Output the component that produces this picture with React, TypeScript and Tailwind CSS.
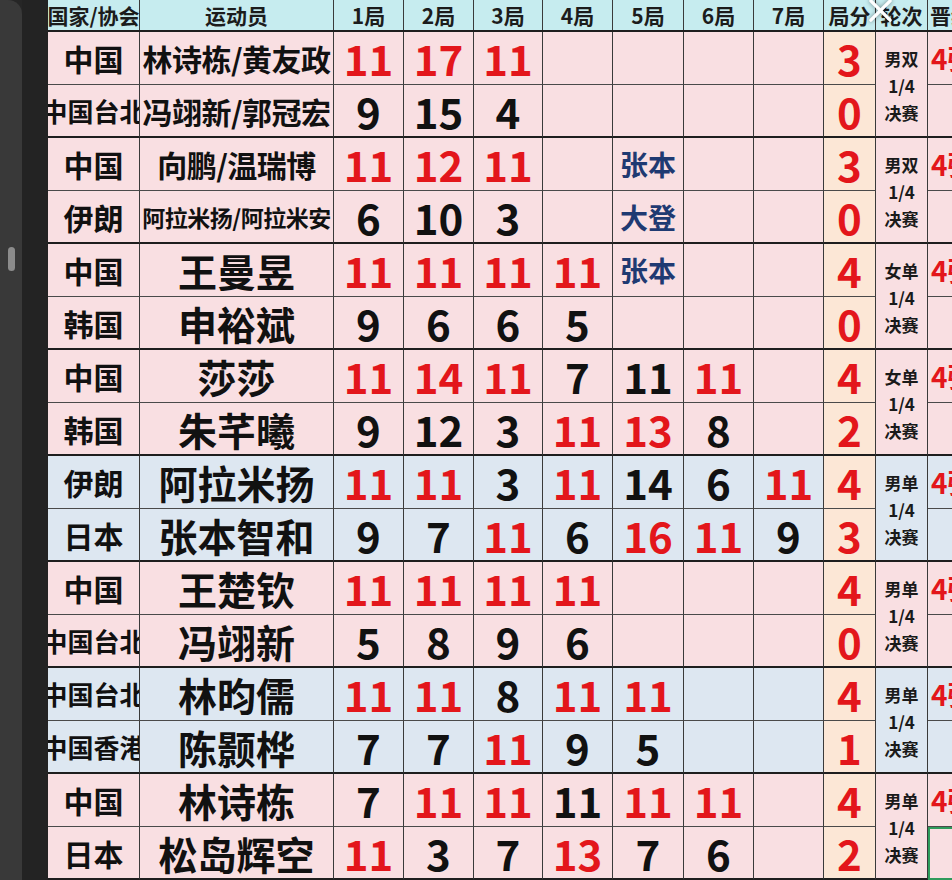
import { Fragment } from "react";

type Side = {
  country: string;
  name: string;
  scores: (number | null)[];
  total: number;
  note?: string;
};

type Match = {
  a: Side;
  b: Side;
  round: string;
  tint: "pink" | "blue";
  doubles?: boolean;
};

const matches: Match[] = [
  {
    a: { country: "中国", name: "林诗栋/黄友政", scores: [11, 17, 11, null, null, null, null], total: 3 },
    b: { country: "中国台北", name: "冯翊新/郭冠宏", scores: [9, 15, 4, null, null, null, null], total: 0 },
    round: "男双",
    tint: "pink",
    doubles: true,
  },
  {
    a: { country: "中国", name: "向鹏/温瑞博", scores: [11, 12, 11, null, null, null, null], total: 3, note: "张本" },
    b: { country: "伊朗", name: "阿拉米扬/阿拉米安", scores: [6, 10, 3, null, null, null, null], total: 0, note: "大登" },
    round: "男双",
    tint: "pink",
    doubles: true,
  },
  {
    a: { country: "中国", name: "王曼昱", scores: [11, 11, 11, 11, null, null, null], total: 4, note: "张本" },
    b: { country: "韩国", name: "申裕斌", scores: [9, 6, 6, 5, null, null, null], total: 0 },
    round: "女单",
    tint: "pink",
  },
  {
    a: { country: "中国", name: "莎莎", scores: [11, 14, 11, 7, 11, 11, null], total: 4 },
    b: { country: "韩国", name: "朱芊曦", scores: [9, 12, 3, 11, 13, 8, null], total: 2 },
    round: "女单",
    tint: "pink",
  },
  {
    a: { country: "伊朗", name: "阿拉米扬", scores: [11, 11, 3, 11, 14, 6, 11], total: 4 },
    b: { country: "日本", name: "张本智和", scores: [9, 7, 11, 6, 16, 11, 9], total: 3 },
    round: "男单",
    tint: "blue",
  },
  {
    a: { country: "中国", name: "王楚钦", scores: [11, 11, 11, 11, null, null, null], total: 4 },
    b: { country: "中国台北", name: "冯翊新", scores: [5, 8, 9, 6, null, null, null], total: 0 },
    round: "男单",
    tint: "pink",
  },
  {
    a: { country: "中国台北", name: "林昀儒", scores: [11, 11, 8, 11, 11, null, null], total: 4 },
    b: { country: "中国香港", name: "陈颢桦", scores: [7, 7, 11, 9, 5, null, null], total: 1 },
    round: "男单",
    tint: "blue",
  },
  {
    a: { country: "中国", name: "林诗栋", scores: [7, 11, 11, 11, 11, 11, null], total: 4 },
    b: { country: "日本", name: "松岛辉空", scores: [11, 3, 7, 13, 7, 6, null], total: 2 },
    round: "男单",
    tint: "pink",
  },
];

const headers = ["国家/协会", "运动员", "1局", "2局", "3局", "4局", "5局", "6局", "7局", "局分", "轮次", "晋级"];

const cols =
  "grid grid-cols-[92px_194px_70px_70px_69px_70px_71px_70px_70px_52px_52px_60px]";

const CloseMark = () => (
  <svg
    className="absolute left-[867px] top-[-3px] h-[27px] w-[27px] drop-shadow-[0_0_2px_rgba(0,0,0,0.45)]"
    viewBox="0 0 28 28"
    fill="none"
  >
    <path d="M4 4 L24 24 M24 4 L4 24" stroke="white" strokeWidth="3.5" strokeLinecap="round" />
  </svg>
);

function MatchRows({ m, last }: { m: Match; last: boolean }) {
  const bg = m.tint === "blue" ? "bg-[#dde7f1]" : "bg-[#f9dfe2]";
  const sides = [m.a, m.b];

  return (
    <div className={`${cols} grid-rows-[53px_53px]`}>
      {sides.map((s, i) => {
        const other = sides[1 - i];
        const edge = i === 0 ? "border-b border-[#4a4a4a]" : "border-b-2 border-b-[#1e1e1e]";
        const cell = `${bg} ${edge} border-r border-r-[#3a3a3a] flex items-center justify-center`;
        const countrySize = s.country.length > 2 ? "text-[26px]" : "text-[30px]";
        const nameSize = m.doubles
          ? s.name.length > 7
            ? "text-[23px] tracking-[-0.5px]"
            : "text-[30px] tracking-[-0.5px]"
          : "text-[39px]";

        return (
          <Fragment key={i}>
            <div className={`${cell} ${countrySize} overflow-hidden whitespace-nowrap leading-[40px]`}>
              <span className="shrink-0">{s.country}</span>
            </div>
            <div className={`${cell} ${nameSize} overflow-hidden whitespace-nowrap leading-[50px]`}>
              <span className="shrink-0">{s.name}</span>
            </div>
            {s.scores.map((v, k) => {
              const o = other.scores[k];
              const win = v !== null && o !== null && v > o;
              return (
                <div key={k} className={`${cell} text-[42px] leading-[50px]`}>
                  {v !== null ? (
                    <span className={win ? "text-[#e3161b]" : "text-[#111]"}>{v}</span>
                  ) : k === 4 && s.note ? (
                    <span className="text-[28px] text-[#1f3a72]">{s.note}</span>
                  ) : null}
                </div>
              );
            })}
            <div
              className={`bg-[#fce7d6] ${edge} border-r border-r-[#3a3a3a] flex items-center justify-center text-[42px] leading-[50px] text-[#e3161b]`}
            >
              {s.total}
            </div>
            {i === 0 && (
              <div
                className={`${bg} row-span-2 border-b-2 border-b-[#1e1e1e] border-r border-r-[#3a3a3a] flex flex-col items-center justify-center text-[17px] leading-[27px] text-[#1a1a1a] pt-[3px]`}
              >
                <span>{m.round}</span>
                <span>1/4</span>
                <span>决赛</span>
              </div>
            )}
            <div
              className={
                last && i === 1
                  ? `${bg} border-2 border-[#2f9b5c] border-b-[#2f9b5c]`
                  : `${bg} ${edge} flex items-center pl-[3px] text-[28px] leading-[40px] text-[#e3161b] whitespace-nowrap overflow-hidden`
              }
            >
              {i === 0 ? "4强" : ""}
            </div>
          </Fragment>
        );
      })}
    </div>
  );
}

export default function App() {
  return (
    <div className="relative flex h-[880px] w-[952px] overflow-hidden bg-[#262626] font-['Noto_Sans_CJK_SC','Noto_Sans',sans-serif] font-bold text-[#111]">
      <div className="flex w-[48px] shrink-0">
        <div className="relative w-[22px] rounded-tr-[14px] bg-[#393939]">
          <div className="absolute left-[8px] top-[247px] h-[24px] w-[7px] rounded-full bg-[#8c8c8c]" />
        </div>
        <div className="w-[26px] bg-[#232323]" />
      </div>

      <div className="flex shrink-0 flex-col">
        <div className={`${cols} h-[33px] bg-[#c6ecef] border-b-2 border-b-[#1e1e1e]`}>
          {headers.map((h, i) => (
            <div
              key={h}
              className={`flex items-center overflow-hidden whitespace-nowrap text-[21px] leading-[30px] text-[#1c1c1c] ${
                i === headers.length - 1 ? "pl-[2px]" : "justify-center border-r border-r-[#3a3a3a]"
              }`}
            >
              <span className="shrink-0">{h}</span>
            </div>
          ))}
        </div>
        {matches.map((m, i) => (
          <MatchRows key={i} m={m} last={i === matches.length - 1} />
        ))}
      </div>

      <CloseMark />
    </div>
  );
}
